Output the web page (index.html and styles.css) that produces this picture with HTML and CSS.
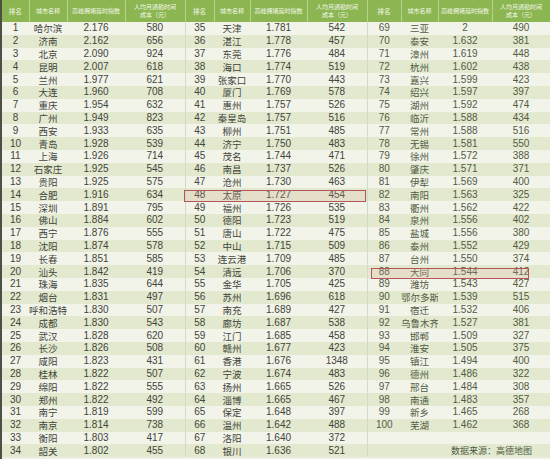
FILE: index.html
```html
<!DOCTYPE html>
<html lang="zh">
<head>
<meta charset="utf-8">
<link rel="stylesheet" href="styles.css">
</head>
<body>
<div class="sheet">
<table class="rank">
<colgroup>
<col class="c-r1"><col class="c-n1"><col class="c-i1"><col class="c-m1">
<col class="c-r2"><col class="c-n2"><col class="c-i2"><col class="c-m2">
<col class="c-r3"><col class="c-n3"><col class="c-i3"><col class="c-m3">
</colgroup>
<thead>
<tr>
<th>排名</th><th>城市名称</th><th>高峰拥堵延时指数</th><th class="two">人均月通勤时间<br>成本（元）</th>
<th>排名</th><th>城市名称</th><th>高峰拥堵延时指数</th><th class="two">人均月通勤时间<br>成本（元）</th>
<th>排名</th><th>城市名称</th><th>高峰拥堵延时指数</th><th class="two">人均月通勤时间<br>成本（元）</th>
</tr>
</thead>
<tbody>
<tr><td>1</td><td>哈尔滨</td><td>2.176</td><td>580</td><td>35</td><td>天津</td><td>1.781</td><td>542</td><td>69</td><td>三亚</td><td>2</td><td>490</td></tr>
<tr><td>2</td><td>济南</td><td>2.162</td><td>656</td><td>36</td><td>湛江</td><td>1.778</td><td>457</td><td>70</td><td>泰安</td><td>1.632</td><td>381</td></tr>
<tr><td>3</td><td>北京</td><td>2.090</td><td>924</td><td>37</td><td>东莞</td><td>1.776</td><td>484</td><td>71</td><td>漳州</td><td>1.619</td><td>448</td></tr>
<tr><td>4</td><td>昆明</td><td>2.007</td><td>618</td><td>38</td><td>海口</td><td>1.774</td><td>519</td><td>72</td><td>杭州</td><td>1.602</td><td>438</td></tr>
<tr><td>5</td><td>兰州</td><td>1.977</td><td>621</td><td>39</td><td>张家口</td><td>1.770</td><td>443</td><td>73</td><td>嘉兴</td><td>1.599</td><td>423</td></tr>
<tr><td>6</td><td>大连</td><td>1.960</td><td>708</td><td>40</td><td>厦门</td><td>1.769</td><td>578</td><td>74</td><td>绍兴</td><td>1.597</td><td>397</td></tr>
<tr><td>7</td><td>重庆</td><td>1.954</td><td>632</td><td>41</td><td>惠州</td><td>1.757</td><td>526</td><td>75</td><td>湖州</td><td>1.592</td><td>474</td></tr>
<tr><td>8</td><td>广州</td><td>1.949</td><td>823</td><td>42</td><td>秦皇岛</td><td>1.757</td><td>516</td><td>76</td><td>临沂</td><td>1.588</td><td>434</td></tr>
<tr><td>9</td><td>西安</td><td>1.933</td><td>635</td><td>43</td><td>柳州</td><td>1.751</td><td>485</td><td>77</td><td>常州</td><td>1.588</td><td>516</td></tr>
<tr><td>10</td><td>青岛</td><td>1.928</td><td>539</td><td>44</td><td>济宁</td><td>1.750</td><td>483</td><td>78</td><td>无锡</td><td>1.581</td><td>550</td></tr>
<tr><td>11</td><td>上海</td><td>1.926</td><td>714</td><td>45</td><td>茂名</td><td>1.744</td><td>471</td><td>79</td><td>徐州</td><td>1.572</td><td>388</td></tr>
<tr><td>12</td><td>石家庄</td><td>1.925</td><td>545</td><td>46</td><td>南昌</td><td>1.737</td><td>526</td><td>80</td><td>肇庆</td><td>1.571</td><td>371</td></tr>
<tr><td>13</td><td>贵阳</td><td>1.925</td><td>575</td><td>47</td><td>沧州</td><td>1.730</td><td>463</td><td>81</td><td>伊犁</td><td>1.569</td><td>400</td></tr>
<tr><td>14</td><td>合肥</td><td>1.916</td><td>634</td><td>48</td><td>太原</td><td>1.727</td><td>454</td><td>82</td><td>南阳</td><td>1.563</td><td>325</td></tr>
<tr><td>15</td><td>深圳</td><td>1.891</td><td>795</td><td>49</td><td>福州</td><td>1.726</td><td>535</td><td>83</td><td>衢州</td><td>1.562</td><td>422</td></tr>
<tr><td>16</td><td>佛山</td><td>1.884</td><td>602</td><td>50</td><td>德阳</td><td>1.723</td><td>519</td><td>84</td><td>泉州</td><td>1.556</td><td>402</td></tr>
<tr><td>17</td><td>西宁</td><td>1.876</td><td>555</td><td>51</td><td>唐山</td><td>1.722</td><td>475</td><td>85</td><td>盐城</td><td>1.556</td><td>380</td></tr>
<tr><td>18</td><td>沈阳</td><td>1.874</td><td>578</td><td>52</td><td>中山</td><td>1.715</td><td>509</td><td>86</td><td>泰州</td><td>1.552</td><td>429</td></tr>
<tr><td>19</td><td>长春</td><td>1.851</td><td>585</td><td>53</td><td>连云港</td><td>1.709</td><td>485</td><td>87</td><td>台州</td><td>1.550</td><td>374</td></tr>
<tr><td>20</td><td>汕头</td><td>1.842</td><td>419</td><td>54</td><td>清远</td><td>1.706</td><td>370</td><td>88</td><td>大同</td><td>1.544</td><td>412</td></tr>
<tr><td>21</td><td>珠海</td><td>1.835</td><td>644</td><td>55</td><td>金华</td><td>1.705</td><td>425</td><td>89</td><td>潍坊</td><td>1.543</td><td>427</td></tr>
<tr><td>22</td><td>烟台</td><td>1.831</td><td>497</td><td>56</td><td>苏州</td><td>1.696</td><td>618</td><td>90</td><td>鄂尔多斯</td><td>1.539</td><td>515</td></tr>
<tr><td>23</td><td>呼和浩特</td><td>1.830</td><td>507</td><td>57</td><td>南充</td><td>1.689</td><td>427</td><td>91</td><td>宿迁</td><td>1.532</td><td>406</td></tr>
<tr><td>24</td><td>成都</td><td>1.830</td><td>543</td><td>58</td><td>廊坊</td><td>1.687</td><td>538</td><td>92</td><td>乌鲁木齐</td><td>1.527</td><td>381</td></tr>
<tr><td>25</td><td>武汉</td><td>1.828</td><td>620</td><td>59</td><td>江门</td><td>1.685</td><td>458</td><td>93</td><td>邯郸</td><td>1.509</td><td>327</td></tr>
<tr><td>26</td><td>长沙</td><td>1.826</td><td>508</td><td>60</td><td>赣州</td><td>1.677</td><td>423</td><td>94</td><td>淮安</td><td>1.505</td><td>375</td></tr>
<tr><td>27</td><td>咸阳</td><td>1.823</td><td>431</td><td>61</td><td>香港</td><td>1.676</td><td>1348</td><td>95</td><td>镇江</td><td>1.494</td><td>400</td></tr>
<tr><td>28</td><td>桂林</td><td>1.822</td><td>507</td><td>62</td><td>宁波</td><td>1.674</td><td>483</td><td>96</td><td>德州</td><td>1.486</td><td>322</td></tr>
<tr><td>29</td><td>绵阳</td><td>1.822</td><td>555</td><td>63</td><td>扬州</td><td>1.665</td><td>526</td><td>97</td><td>邢台</td><td>1.484</td><td>308</td></tr>
<tr><td>30</td><td>郑州</td><td>1.822</td><td>492</td><td>64</td><td>淄博</td><td>1.665</td><td>467</td><td>98</td><td>南通</td><td>1.483</td><td>357</td></tr>
<tr><td>31</td><td>南宁</td><td>1.819</td><td>599</td><td>65</td><td>保定</td><td>1.648</td><td>397</td><td>99</td><td>新乡</td><td>1.465</td><td>268</td></tr>
<tr><td>32</td><td>南京</td><td>1.814</td><td>738</td><td>66</td><td>温州</td><td>1.642</td><td>488</td><td>100</td><td>芜湖</td><td>1.462</td><td>368</td></tr>
<tr><td>33</td><td>衡阳</td><td>1.803</td><td>417</td><td>67</td><td>洛阳</td><td>1.640</td><td>372</td><td></td><td></td><td></td><td></td></tr>
<tr><td>34</td><td>韶关</td><td>1.802</td><td>455</td><td>68</td><td>银川</td><td>1.636</td><td>521</td><td></td><td colspan="3" class="source">数据来源：高德地图</td></tr>
</tbody>
</table>
<div class="mark mark-48"></div>
<div class="mark mark-88"></div>
</div>
</body>
</html>
```

FILE: styles.css
```css
html, body {
  margin: 0;
  padding: 0;
  background: #eef0e4;
}
.sheet {
  position: relative;
  width: 550px;
  height: 459px;
  overflow: hidden;
  border-left: 2px solid #4e5048;
  box-sizing: border-box;
}
.rank {
  width: 548px;
  border-collapse: collapse;
  table-layout: fixed;
  font-family: "Liberation Sans", "Noto Sans CJK SC", sans-serif;
  color: #41453a;
}
.c-r1 { width: 27px; }
.c-n1 { width: 38px; }
.c-i1 { width: 58px; }
.c-m1 { width: 60px; }
.c-r2 { width: 29px; }
.c-n2 { width: 36px; }
.c-i2 { width: 57px; }
.c-m2 { width: 60px; }
.c-r3 { width: 34px; }
.c-n3 { width: 37px; }
.c-i3 { width: 54px; }
.c-m3 { width: 58px; }
.rank th {
  height: 22px;
  padding: 0;
  background: #8cb652;
  color: #f4f8ea;
  font-weight: normal;
  font-size: 6px;
  line-height: 8px;
  text-align: center;
  border-right: 1px solid #b7d28c;
  font-family: "Noto Sans CJK SC", sans-serif;
}
.rank th:nth-child(4n+1) { font-size: 6.5px; }
.rank td {
  height: 12.8px;
  padding: 0;
  font-size: 10px;
  line-height: 12px;
  text-align: center;
  white-space: nowrap;
  overflow: hidden;
}
.rank td:nth-child(2),
.rank td:nth-child(6),
.rank td:nth-child(10) {
  font-family: "Noto Sans CJK SC", sans-serif;
  font-size: 9.5px;
}
.rank td:nth-child(4),
.rank td:nth-child(8) {
  border-right: 1px solid #d3dcbc;
}
.rank td:nth-child(n+9) {
  color: #515c45;
}
.rank tbody tr:nth-child(odd) { background: #f2f3e9; }
.rank tbody tr:nth-child(even) { background: #e3e9cf; }
.rank td.source {
  text-align: right;
  padding-right: 18px;
  font-family: "Noto Sans CJK SC", sans-serif;
  font-size: 9px;
  color: #4e5a42;
}
.mark {
  position: absolute;
  border: 1px solid #b5545a;
  background: rgba(240, 170, 170, 0.18);
  box-sizing: border-box;
}
.mark-48 {
  left: 182px;
  top: 190px;
  width: 182px;
  height: 12px;
}
.mark-88 {
  left: 369px;
  top: 268px;
  width: 158px;
  height: 11px;
}
```
